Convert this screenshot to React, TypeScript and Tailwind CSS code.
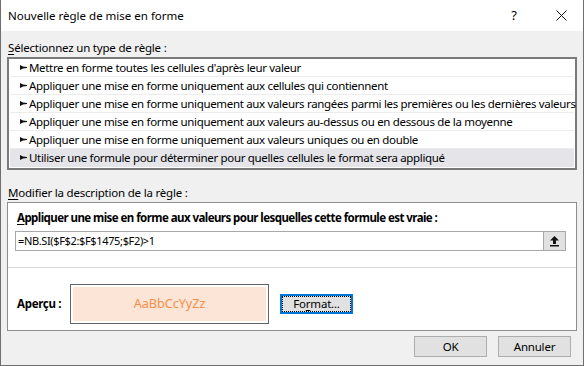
import React from "react";

const rules = [
  "Mettre en forme toutes les cellules d'après leur valeur",
  "Appliquer une mise en forme uniquement aux cellules qui contiennent",
  "Appliquer une mise en forme uniquement aux valeurs rangées parmi les premières ou les dernières valeurs",
  "Appliquer une mise en forme uniquement aux valeurs au-dessus ou en dessous de la moyenne",
  "Appliquer une mise en forme uniquement aux valeurs uniques ou en double",
  "Utiliser une formule pour déterminer pour quelles cellules le format sera appliqué",
];

function Pointer() {
  return (
    <svg width="7" height="5" viewBox="0 0 7 5" className="shrink-0">
      <polygon points="0,0 3,1.5 7,2 7,3 3,3.5 0,5" fill="#111" />
    </svg>
  );
}

export default function App() {
  // selected rule is the formula one
  const selected = 5;

  return (
    <div className="w-[584px] h-[366px] flex flex-col bg-[#f0f0f0] border-x border-b border-[#6e6e6e] text-[11.5px] tracking-[-0.2px] text-black font-['Noto_Sans',sans-serif] overflow-hidden">
      {/* title bar */}
      <div className="h-[31px] shrink-0 bg-white flex items-center pl-[7px] tracking-normal">
        <span className="flex-1 leading-[16px]">Nouvelle règle de mise en forme</span>
        <span className="w-[20px] text-center text-[13px] mr-[32px]">?</span>
        <svg width="11" height="11" viewBox="0 0 11 11" className="mr-[16px]">
          <path d="M0.5 0.5 L10.5 10.5 M10.5 0.5 L0.5 10.5" stroke="#111" strokeWidth="1" />
        </svg>
      </div>

      <div className="flex-1 flex flex-col px-[6px] pt-[9px]">
        <div className="leading-[16px] h-[16px] mb-[1px] pl-[1px]">
          <span className="underline underline-offset-2">S</span>électionnez un type de règle :
        </div>

        {/* rule type list */}
        <div className="border-2 border-[#7a7a7a] bg-white px-[1px] pb-[1px] tracking-[-0.33px]">
          {rules.map((r, i) => (
            <div
              key={r}
              className={`h-[18px] flex items-center gap-[1px] pl-[10px] border-b border-[#ececec] whitespace-nowrap ${
                i === selected ? "bg-[#e4e4e9] border-b-transparent" : ""
              }`}
            >
              <Pointer />
              <span className="pl-[1px] leading-[16px]">{r}</span>
            </div>
          ))}
        </div>

        <div className="leading-[16px] h-[16px] mt-[15px] mb-[1px] pl-[1px]">
          <span className="underline underline-offset-2">M</span>odifier la description de la règle :
        </div>

        {/* description panel */}
        <div className="bg-white border border-[#8e8e8e] pt-[7px] pb-[6px]">
          <div className="pl-[9px] leading-[16px] font-bold tracking-[-0.56px]">
            <span className="underline underline-offset-2">A</span>ppliquer une mise en forme aux valeurs pour lesquelles cette formule est vraie :
          </div>
          <div className="mt-[5px] ml-[7px] mr-[10px] h-[20px] border border-[#a8a8a8] flex items-stretch">
            <div className="flex-1 pl-[2px] flex items-center leading-[16px] text-[11px] tracking-[-0.35px]">=NB.SI($F$2:$F$1475;$F2)&gt;1</div>
            <div className="w-[22px] bg-[#e1e1e1] border-l border-[#a8a8a8] flex items-center justify-center">
              <svg width="11" height="12" viewBox="0 0 11 12">
                <path d="M5.5 1 L10 5.5 L7 5.5 L7 9 L4 9 L4 5.5 L1 5.5 Z" fill="#111" />
                <rect x="1" y="10" width="9" height="1.5" fill="#111" />
              </svg>
            </div>
          </div>
          <div className="mt-[16px] h-px bg-[#d9d9d9]" />
          <div className="mt-[16px] flex items-center pl-[9px]">
            <div className="w-[53px] font-bold leading-[16px] tracking-[-0.3px]">Aperçu :</div>
            <div className="w-[199px] h-[40px] border border-[#646464] p-[2px] bg-white">
              <div className="w-full h-full bg-[#fce4d6] flex items-center justify-center text-[12.6px] tracking-normal text-[#f2904a]">
                AaBbCcYyZz
              </div>
            </div>
            <button className="ml-[11px] w-[73px] h-[20px] border-2 border-[#0078d7] bg-[#e1e1e1] p-0">
              <div className="w-full h-full border border-dotted border-black flex items-center justify-center leading-[14px]">
                Fo<span className="underline underline-offset-2">r</span>mat...
              </div>
            </button>
          </div>
        </div>

        <div className="mt-[5px] flex justify-end gap-[11px] pr-[6px]">
          <button className="w-[73px] h-[21px] bg-[#e1e1e1] border border-[#adadad] leading-[16px]">OK</button>
          <button className="w-[73px] h-[21px] bg-[#e1e1e1] border border-[#adadad] leading-[16px]">Annuler</button>
        </div>
      </div>
    </div>
  );
}
